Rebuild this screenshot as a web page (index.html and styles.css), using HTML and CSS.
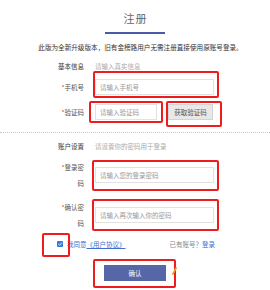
FILE: index.html
```html
<!DOCTYPE html>
<html lang="zh-CN">
<head>
<meta charset="utf-8">
<link rel="stylesheet" href="styles.css">
</head>
<body>
<div class="page">
  <h1 class="title">注册</h1>
  <div class="bar"></div>
  <p class="notice">此版为全新升级版本，旧有金榜路用户无需注册直接使用原账号登录。</p>

  <div class="row section"><span class="label">基本信息</span><span class="hint">请输入真实信息</span></div>
  <div class="row field"><span class="label"><i>*</i>手机号</span><span class="input wide">请输入手机号</span></div>
  <div class="row field code"><span class="label"><i>*</i>验证码</span><span class="input short">请输入验证码</span><span class="btn-code">获取验证码</span></div>

  <div class="divider"></div>

  <div class="row section two"><span class="label">账户设置</span><span class="hint">请设置你的密码用于登录</span></div>
  <div class="row field tall"><span class="label"><i>*</i>登录密码</span><span class="input wide">请输入您的登录密码</span></div>
  <div class="row field tall next"><span class="label"><i>*</i>确认密码</span><span class="input wide">请输入再次输入你的密码</span></div>

  <div class="agree">
    <span class="check"><svg viewBox="0 0 6 6" width="6" height="6"><rect width="6" height="6" rx="1" fill="#2f7de1"/><path d="M1.4 3.1 L2.6 4.2 L4.7 1.8" fill="none" stroke="#fff" stroke-width="0.9"/></svg></span>
    <span class="link">我同意<u>《用户协议》</u></span>
    <span class="login">已有账号？<b>登录</b></span>
  </div>

  <div class="submit"><span class="btn">确认</span></div>

  <div class="mark m1"></div>
  <div class="mark m2"></div>
  <div class="mark m3"></div>
  <div class="mark m4"></div>
  <div class="mark m5"></div>
  <div class="mark m6"></div>
  <div class="mark m7"></div>
  <svg class="leaf" viewBox="0 0 5 8" width="5" height="8"><path d="M0.8 7 L4.2 1" stroke="#f0a020" stroke-width="1.6" stroke-linecap="round"/></svg>
</div>
</body>
</html>
```

FILE: styles.css
```css
* { box-sizing: border-box; }
html, body { margin: 0; padding: 0; background: #fff; }
body { font-family: "Noto Sans CJK SC", "Noto Sans", sans-serif; color: #333; }
.page { position: relative; width: 270px; height: 290px; padding-top: 10px; overflow: hidden; }
.title { margin: 0; padding-left: 1px; font-size: 11px; line-height: 16px; font-weight: 400; color: #666; text-align: center; letter-spacing: 1px; }
.bar { width: 60px; height: 2px; margin: 6px auto 0; background: #4a5ca6; }
.notice { margin: 8px 0 0; padding-left: 11px; font-size: 6.6px; line-height: 10px; text-align: center; color: #333; }

.row { display: flex; align-items: center; padding-left: 58px; font-size: 6.5px; }
.label { width: 26px; flex: none; text-align: right; color: #555; margin-right: 11px; }
.label i { font-style: normal; color: #e33; }
.section { margin-top: 9px; height: 10px; line-height: 10px; }
.section .label { color: #333; }
.hint { color: #aaa; }
.section.two { margin-top: 8px; }

.field { margin-top: 8px; height: 16px; }
.field.code { margin-top: 9px; }
.input { height: 16px; line-height: 14px; padding-left: 4px; border: 1px solid #e2e2e2; background: #fff; color: #999; }
.input.wide { width: 119px; }
.input.short { width: 62px; }
.btn-code { margin-left: 11px; width: 45px; height: 16px; line-height: 14px; text-align: center; background: #e8e8e8; border: 1px solid #d4d4d4; color: #555; }

.divider { margin-top: 12px; border-top: 1px dotted #c8c8c8; }

.tall { height: 32px; line-height: 16px; }
.tall .label { align-self: stretch; }
.tall.next { margin-top: 8px; }

.agree { display: flex; align-items: center; margin-top: 8px; height: 10px; padding: 0 55px 0 57px; font-size: 6.5px; line-height: 10px; }
.check { display: flex; width: 6px; height: 6px; margin-right: 4px; }
.link { color: #3f6fd0; }
.link u { text-decoration-thickness: 0.5px; }
.login { margin-left: auto; color: #888; }
.login b { font-weight: 400; color: #3f6fd0; }

.submit { display: flex; justify-content: center; margin-top: 16px; }
.btn { width: 62px; height: 16px; line-height: 16px; text-align: center; background: #5667a8; color: #fff; font-size: 6.5px; }

.mark { position: absolute; border: 2px solid #ee1c1c; border-radius: 2px; }
.m1 { left: 93px; top: 71px; width: 126px; height: 27px; }
.m2 { left: 89px; top: 101px; width: 74px; height: 22px; }
.m3 { left: 166px; top: 101px; width: 56px; height: 26px; }
.m4 { left: 92px; top: 160px; width: 127px; height: 31px; }
.m5 { left: 92px; top: 199px; width: 127px; height: 32px; }
.m6 { left: 42px; top: 233px; width: 28px; height: 24px; }
.m7 { left: 93px; top: 259px; width: 83px; height: 29px; }
.leaf { position: absolute; left: 172px; top: 267px; }
```
